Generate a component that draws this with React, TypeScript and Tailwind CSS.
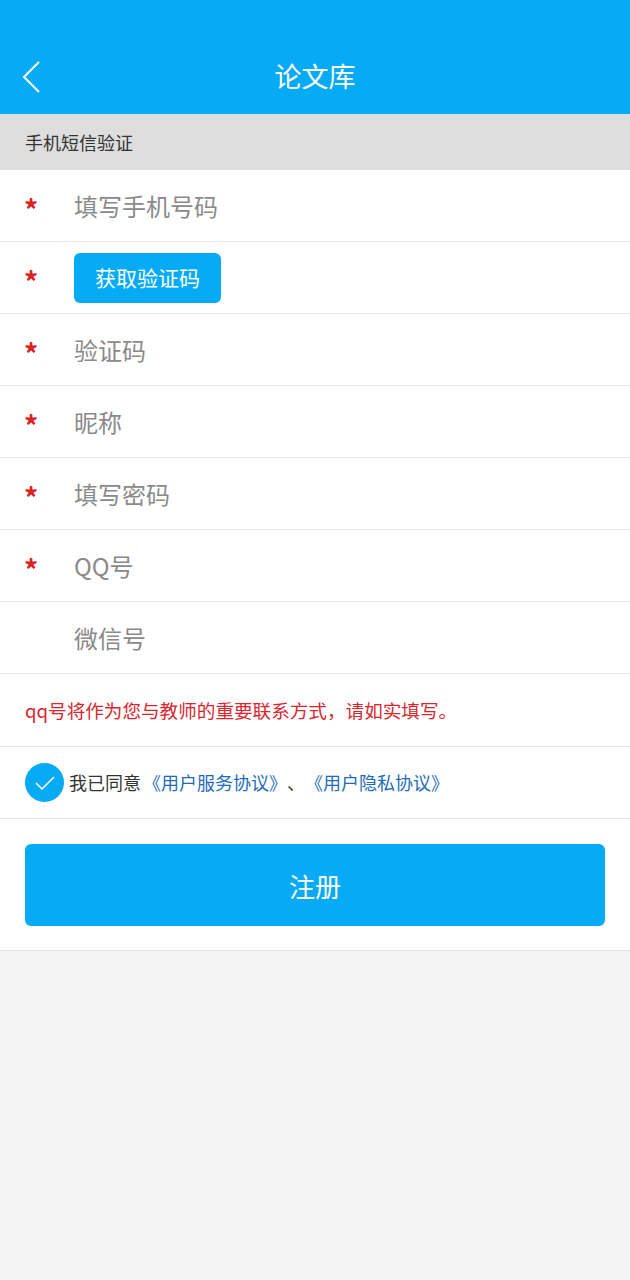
import React from 'react';

const font = { fontFamily: '"Noto Sans CJK SC", "Noto Sans", sans-serif' };

const fields = [
  { label: '填写手机号码', required: true },
  { label: '获取验证码', required: true, button: true },
  { label: '验证码', required: true },
  { label: '昵称', required: true },
  { label: '填写密码', required: true },
  { label: 'QQ号', required: true },
  { label: '微信号', required: false },
];

function Row({ label, required, button }: { label: string; required: boolean; button?: boolean }) {
  return (
    <div className="flex items-center h-[72px] border-b border-[#e8e8e8] bg-white">
      <div className="w-[74px] pl-[24px] text-[#e02020] text-[28px] font-bold leading-none pt-[6px]">
        {required ? '*' : ''}
      </div>
      {button ? (
        <button className="h-[50px] px-[21px] rounded-[6px] bg-[#06aaf5] text-white text-[21px] leading-none">
          {label}
        </button>
      ) : (
        <span className="text-[24px] text-[#8a8a8a] leading-none">{label}</span>
      )}
    </div>
  );
}

export default function App() {
  return (
    <div className="min-h-screen bg-[#f4f4f4]" style={font}>
      {/* Header */}
      <div className="relative h-[114px] bg-[#06aaf5] flex items-end justify-center pb-[25px]">
        <svg className="absolute left-[20px] top-[60px]" width="22" height="34" viewBox="0 0 22 34">
          <path d="M19 2 L4 17 L19 32" fill="none" stroke="white" strokeWidth="2" />
        </svg>
        <span className="text-white text-[27px] leading-none">论文库</span>
      </div>

      <div className="h-[56px] bg-[#dedede] flex items-center pl-[25px] text-[18px] text-[#333]">
        手机短信验证
      </div>

      {fields.map((f) => (
        <Row key={f.label} {...f} />
      ))}

      <div className="h-[73px] flex items-center pl-[25px] border-b border-[#e8e8e8] bg-white text-[18.6px] text-[#d8262f]">
        qq号将作为您与教师的重要联系方式，请如实填写。
      </div>

      <div className="h-[72px] flex items-center pl-[25px] border-b border-[#e8e8e8] bg-white text-[18px]">
        <div className="w-[39px] h-[39px] rounded-full bg-[#06aaf5] flex items-center justify-center">
          <svg width="22" height="16" viewBox="0 0 22 16">
            <path d="M2 8 L8 14 L20 2" fill="none" stroke="white" strokeWidth="1.5" />
          </svg>
        </div>
        <span className="ml-[5px] text-[#333]">我已同意</span>
        <span className="ml-[2px] text-[#1e6bb8]">《用户服务协议》</span>
        <span className="text-[#333]">、</span>
        <span className="text-[#1e6bb8]">《用户隐私协议》</span>
      </div>

      <div className="px-[25px] pt-[25px] pb-[24px] bg-white border-b border-[#e2e2e2]">
        <button className="w-full h-[82px] rounded-[6px] bg-[#06aaf5] text-white text-[26px]">
          注册
        </button>
      </div>
    </div>
  );
}
